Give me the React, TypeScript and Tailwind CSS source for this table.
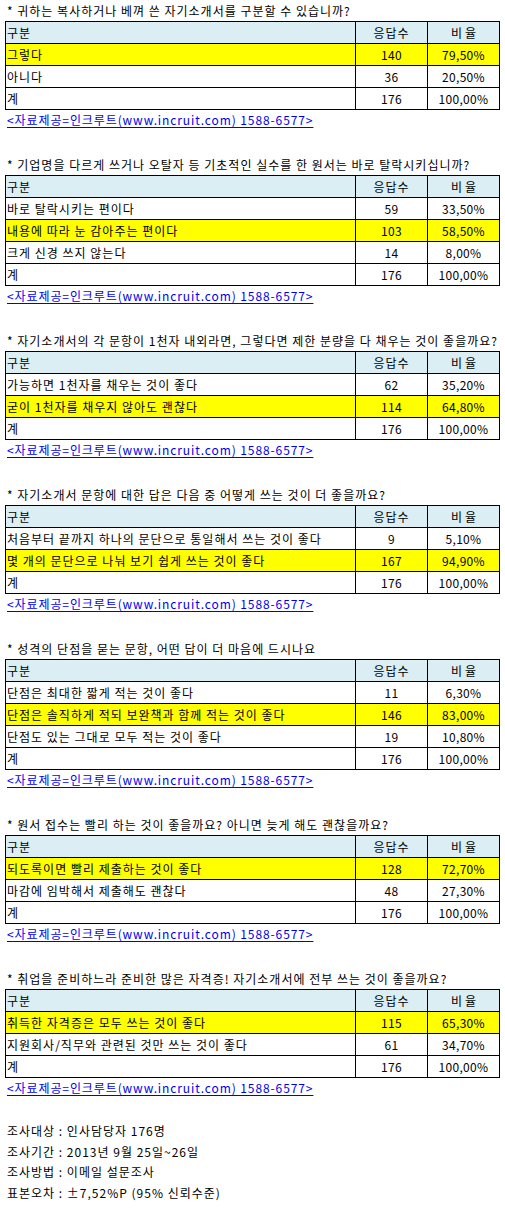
import React from "react";

type Row = { label: string; count: string; pct: string; hl?: boolean };
type Section = { title: string; rows: Row[] };

const sections: Section[] = [
  {
    title: "* 귀하는 복사하거나 베껴 쓴 자기소개서를 구분할 수 있습니까?",
    rows: [
      { label: "그렇다", count: "140", pct: "79,50%", hl: true },
      { label: "아니다", count: "36", pct: "20,50%" },
      { label: "계", count: "176", pct: "100,00%" },
    ],
  },
  {
    title: "* 기업명을 다르게 쓰거나 오탈자 등 기초적인 실수를 한 원서는 바로 탈락시키십니까?",
    rows: [
      { label: "바로 탈락시키는 편이다", count: "59", pct: "33,50%" },
      { label: "내용에 따라 눈 감아주는 편이다", count: "103", pct: "58,50%", hl: true },
      { label: "크게 신경 쓰지 않는다", count: "14", pct: "8,00%" },
      { label: "계", count: "176", pct: "100,00%" },
    ],
  },
  {
    title: "* 자기소개서의 각 문항이 1천자 내외라면, 그렇다면 제한 분량을 다 채우는 것이 좋을까요?",
    rows: [
      { label: "가능하면 1천자를 채우는 것이 좋다", count: "62", pct: "35,20%" },
      { label: "굳이 1천자를 채우지 않아도 괜찮다", count: "114", pct: "64,80%", hl: true },
      { label: "계", count: "176", pct: "100,00%" },
    ],
  },
  {
    title: "* 자기소개서 문항에 대한 답은 다음 중 어떻게 쓰는 것이 더 좋을까요?",
    rows: [
      { label: "처음부터 끝까지 하나의 문단으로 통일해서 쓰는 것이 좋다", count: "9", pct: "5,10%" },
      { label: "몇 개의 문단으로 나눠 보기 쉽게 쓰는 것이 좋다", count: "167", pct: "94,90%", hl: true },
      { label: "계", count: "176", pct: "100,00%" },
    ],
  },
  {
    title: "* 성격의 단점을 묻는 문항, 어떤 답이 더 마음에 드시나요",
    rows: [
      { label: "단점은 최대한 짧게 적는 것이 좋다", count: "11", pct: "6,30%" },
      { label: "단점은 솔직하게 적되 보완책과 함께 적는 것이 좋다", count: "146", pct: "83,00%", hl: true },
      { label: "단점도 있는 그대로 모두 적는 것이 좋다", count: "19", pct: "10,80%" },
      { label: "계", count: "176", pct: "100,00%" },
    ],
  },
  {
    title: "* 원서 접수는 빨리 하는 것이 좋을까요? 아니면 늦게 해도 괜찮을까요?",
    rows: [
      { label: "되도록이면 빨리 제출하는 것이 좋다", count: "128", pct: "72,70%", hl: true },
      { label: "마감에 임박해서 제출해도 괜찮다", count: "48", pct: "27,30%" },
      { label: "계", count: "176", pct: "100,00%" },
    ],
  },
  {
    title: "* 취업을 준비하느라 준비한 많은 자격증! 자기소개서에 전부 쓰는 것이 좋을까요?",
    rows: [
      { label: "취득한 자격증은 모두 쓰는 것이 좋다", count: "115", pct: "65,30%", hl: true },
      { label: "지원회사/직무와 관련된 것만 쓰는 것이 좋다", count: "61", pct: "34,70%" },
      { label: "계", count: "176", pct: "100,00%" },
    ],
  },
];

function TableRow({ cells, bg, header }: { cells: [string, string, string]; bg: string; header?: boolean }) {
  return (
    <div className={`grid grid-cols-[350px_72px_72px] h-[22px] ${bg}`}>
      <div className="border-r border-b border-black pl-[1px] flex items-center whitespace-nowrap overflow-hidden tracking-[1px]">
        {cells[0]}
      </div>
      <div
        className={`border-r border-b border-black flex items-center justify-center ${
          header ? "tracking-[1px]" : "tracking-[0.3px]"
        }`}
      >
        {cells[1]}
      </div>
      <div
        className={`border-r border-b border-black flex items-center justify-center ${
          header ? "tracking-[3px] pl-[3px]" : "tracking-[0.3px]"
        }`}
      >
        {cells[2]}
      </div>
    </div>
  );
}

function SurveySection({ s }: { s: Section }) {
  return (
    <div className="pb-[24px]">
      <div className="h-[21px] pl-[7px] flex items-center whitespace-nowrap tracking-[1px]">{s.title}</div>
      <div className="ml-[5px] w-[495px] border-t border-l border-black">
        <TableRow cells={["구분", "응답수", "비율"]} bg="bg-[#daeef3]" header />
        {s.rows.map((r, i) => (
          <TableRow key={i} cells={[r.label, r.count, r.pct]} bg={r.hl ? "bg-[#ffff00]" : "bg-white"} />
        ))}
      </div>
      <div className="h-[20px] pl-[7px] flex items-center">
        <span className="text-[#0000ee] underline underline-offset-2 tracking-[0.9px]">
          &lt;자료제공=인크루트(www.incruit.com) 1588-6577&gt;
        </span>
      </div>
    </div>
  );
}

export default function App() {
  return (
    <div
      className="w-[505px] h-[1210px] bg-white text-black text-[12px] overflow-hidden"
      style={{ fontFamily: '"Noto Sans CJK KR", "Noto Sans", sans-serif' }}
    >
      {sections.map((s, i) => (
        <SurveySection key={i} s={s} />
      ))}
      <div className="pl-[7px] leading-[20.5px] -mt-[1px] tracking-[1px]">
        <div>조사대상 : 인사담당자 176명</div>
        <div>조사기간 : 2013년 9월 25일~26일</div>
        <div>조사방법 : 이메일 설문조사</div>
        <div>표본오차 : ±7,52%P (95% 신뢰수준)</div>
      </div>
    </div>
  );
}
